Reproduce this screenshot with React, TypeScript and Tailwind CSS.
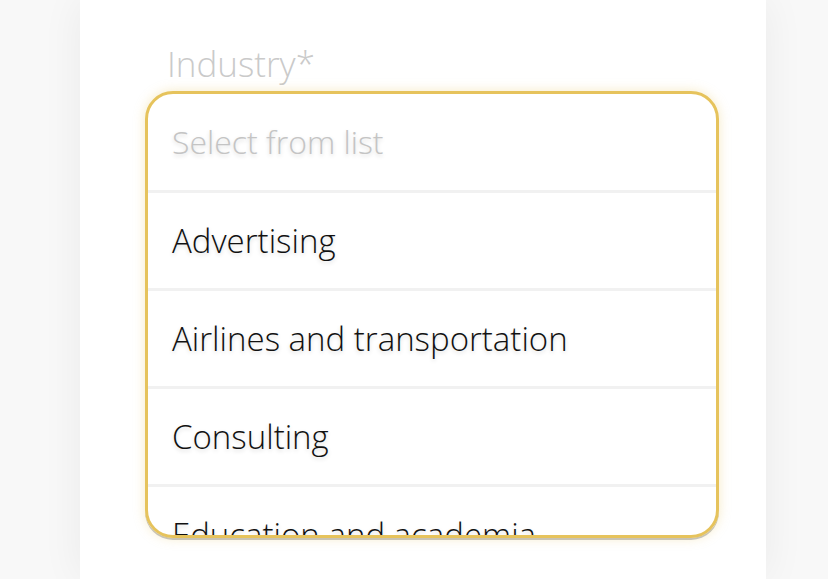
import React from "react";

const items = [
  "Advertising",
  "Airlines and transportation",
  "Consulting",
  "Education and academia",
];

export default function App() {
  return (
    <div className="h-[579px] w-[828px] overflow-hidden bg-[#f8f8f8] flex" style={{ fontFamily: "'Open Sans', Lato, sans-serif" }}>
      <div className="ml-[80px] w-[686px] h-full bg-white shadow-[0_0_40px_rgba(0,0,0,0.06)] flex flex-col">
        <div className="ml-[87px] mt-[40px] text-[35px] leading-[48px] font-light text-[#cacaca]">Industry*</div>
        <div className="ml-[65px] mt-[3px] w-[574px] h-[447px] relative">
          <div className="absolute inset-0 rounded-[28px] shadow-[0_2px_0_#c4c4c4]" />
          <div className="relative h-full rounded-[28px] border-[3px] border-[#e6c35c] bg-white overflow-hidden shadow-[0_0_12px_rgba(230,195,92,0.35)]">
            <div className="h-[96px] flex items-center pl-[24px] text-[32px] font-light text-[#c4c4c4] [text-shadow:0_2px_4px_rgba(0,0,0,0.15)]">
              Select from list
            </div>
            {items.map((t) => (
              <div key={t} className="h-[98px] flex items-center pl-[24px] border-t-[3px] border-[#f1f1f1] text-[33px] font-light text-[#111111] [text-shadow:0_2px_4px_rgba(0,0,0,0.15)] shrink-0">
                {t}
              </div>
            ))}
          </div>
        </div>
      </div>
    </div>
  );
}
